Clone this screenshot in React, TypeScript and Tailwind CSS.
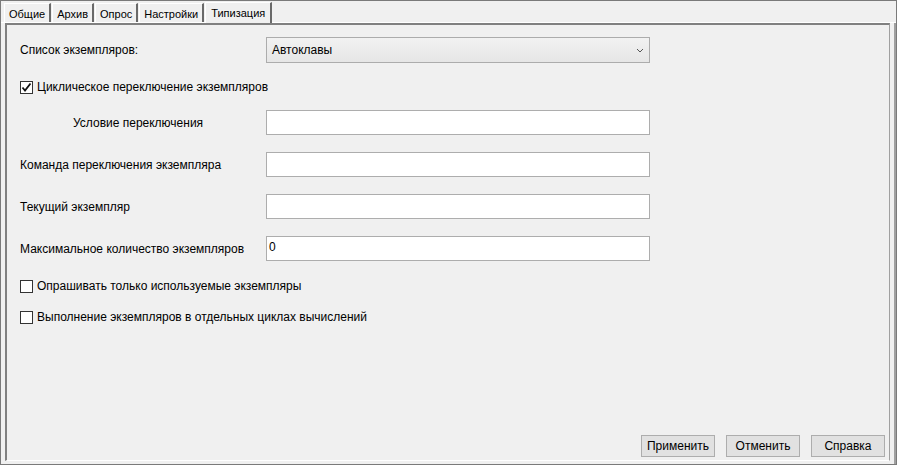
import React from "react";

const Tab = ({ label, active }: { label: string; active?: boolean }) => (
  <div
    className={
      active
        ? "h-[21px] px-[5px] bg-[#f0f0f0] border-l border-t border-white border-r-2 border-r-[#696969] -mb-[1px] relative z-10 flex items-start pt-[2px]"
        : "h-[19px] mt-[2px] px-[4px] bg-[#f0f0f0] border-l border-t border-white border-r-2 border-r-[#696969] flex items-start pt-[2px]"
    }
  >
    {label}
  </div>
);

const Input = ({ value }: { value?: string }) => (
  <div className="w-[384px] h-[25px] bg-white border border-[#adadad] px-[2px] text-[12px] leading-[20px]">
    {value}
  </div>
);

const Check = ({ checked, label }: { checked?: boolean; label: string }) => (
  <div className="flex items-center gap-[4px] h-[16px]">
    <div className="w-[13px] h-[13px] bg-white border border-[#333] flex items-center justify-center">
      {checked && (
        <svg width="11" height="11" viewBox="0 0 11 11">
          <path d="M1.5 5.5 L4 8.5 L9.5 1.5" stroke="#111" strokeWidth="1.8" fill="none" />
        </svg>
      )}
    </div>
    <span>{label}</span>
  </div>
);

const Row = ({ label, indent, children }: { label: string; indent?: boolean; children: React.ReactNode }) => (
  <div className="flex items-center">
    <div className={"w-[246px] " + (indent ? "pl-[53px]" : "")}>{label}</div>
    {children}
  </div>
);

const Btn = ({ label }: { label: string }) => (
  <div className="w-[74px] h-[22px] bg-[#e1e1e1] border border-[#adadad] flex items-center justify-center">{label}</div>
);

export default function App() {
  return (
    <div
      className="w-[897px] h-[465px] bg-[#f0f0f0] border border-[#7a7a7a] flex flex-col text-[12px] text-black"
      style={{ fontFamily: '"Liberation Sans", Arial, sans-serif' }}
    >
      <div className="flex items-end pl-[3px] h-[22px] gap-[1px] border-b border-white text-[11px]">
        <Tab label="Общие" />
        <Tab label="Архив" />
        <Tab label="Опрос" />
        <Tab label="Настройки" />
        <Tab label="Типизация" active />
      </div>
      <div className="flex-1 flex flex-col px-[4px] pb-[3px] border-r-2 border-r-[#a0a0a0]">
        <div className="flex-1 flex flex-col border-l-2 border-t-2 border-[#808080] border-r border-r-[#a0a0a0] border-b border-b-white pl-[13px] pr-[4px] pt-[12px] pb-[2px]">
          <Row label="Список экземпляров:">
            <div className="w-[384px] h-[26px] bg-gradient-to-b from-[#f2f2f2] to-[#e6e6e6] border border-[#acacac] flex items-center justify-between px-[5px]">
              <span>Автоклавы</span>
              <svg width="8" height="5" viewBox="0 0 8 5"><path d="M1 1 L4 4 L7 1" stroke="#555" fill="none" /></svg>
            </div>
          </Row>
          <div className="mt-[16px]"><Check checked label="Циклическое переключение экземпляров" /></div>
          <div className="mt-[15px] flex flex-col gap-[17px]">
            <Row label="Условие переключения" indent><Input /></Row>
            <Row label="Команда переключения экземпляра"><Input /></Row>
            <Row label="Текущий экземпляр"><Input /></Row>
            <Row label="Максимальное количество экземпляров"><Input value="0" /></Row>
          </div>
          <div className="mt-[17px] flex flex-col gap-[15px]">
            <Check label="Опрашивать только используемые экземпляры" />
            <Check label="Выполнение экземпляров в отдельных циклах вычислений" />
          </div>
          <div className="flex-1" />
          <div className="flex justify-end gap-[11px] mb-[1px]">
            <Btn label="Применить" />
            <Btn label="Отменить" />
            <Btn label="Справка" />
          </div>
        </div>
      </div>
    </div>
  );
}
